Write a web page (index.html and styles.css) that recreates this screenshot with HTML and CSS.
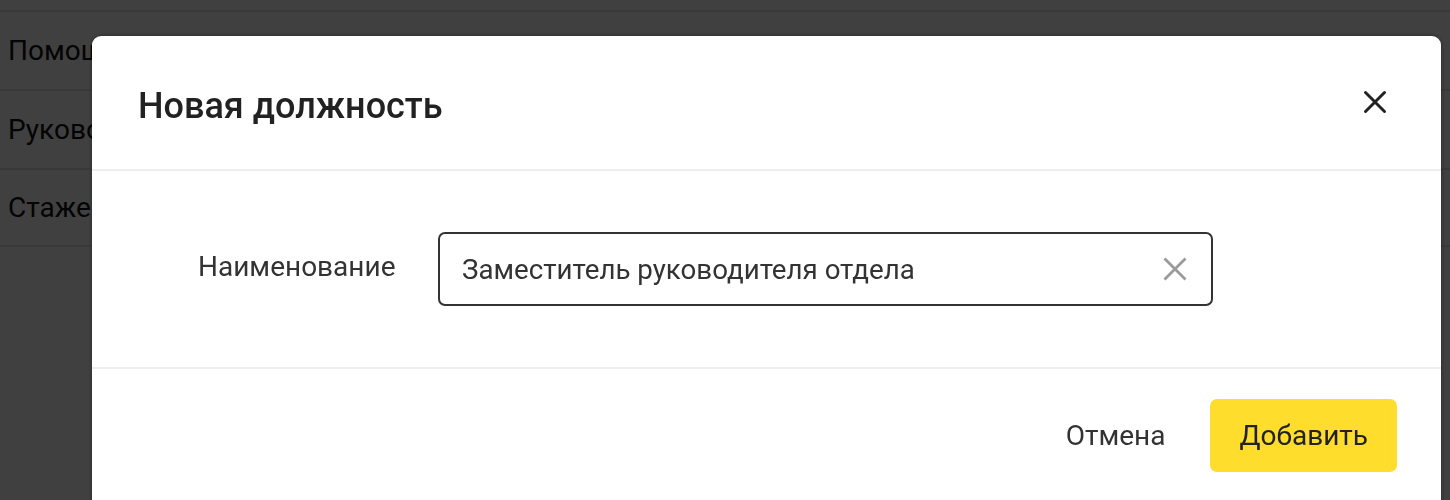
FILE: index.html
```html
<!DOCTYPE html>
<html lang="ru">
<head>
<meta charset="utf-8">
<title>Новая должность</title>
<link rel="stylesheet" href="styles.css">
</head>
<body>
<ul class="list">
  <li class="row">Помощник руководителя</li>
  <li class="row">Руководитель отдела</li>
  <li class="row">Стажер</li>
</ul>
<div class="overlay">
  <div class="modal">
    <div class="modal-header">
      <h2 class="modal-title">Новая должность</h2>
      <button class="close" aria-label="Закрыть">
        <svg width="24" height="24" viewBox="0 0 24 24"><path d="M2.5 2.5L21.5 21.5M21.5 2.5L2.5 21.5" stroke="#222" stroke-width="3" stroke-linecap="round"/></svg>
      </button>
    </div>
    <div class="modal-body">
      <label class="field-label">Наименование</label>
      <div class="input">
        <span class="input-value">Заместитель руководителя отдела</span>
        <svg class="clear" width="24" height="24" viewBox="0 0 24 24"><path d="M1.5 1.5L22.5 22.5M22.5 1.5L1.5 22.5" stroke="#9a9a9a" stroke-width="2.8"/></svg>
      </div>
    </div>
    <div class="modal-footer">
      <button class="btn btn-ghost">Отмена</button>
      <button class="btn btn-primary">Добавить</button>
    </div>
  </div>
</div>
</body>
</html>
```
FILE: styles.css
```css
* { box-sizing: border-box; }
html, body { margin: 0; padding: 0; }
body {
  width: 1450px;
  height: 500px;
  overflow: hidden;
  background: #fff;
  font-family: Roboto, "Noto Sans", Arial, sans-serif;
  color: #333;
}
.list {
  list-style: none;
  margin: 0;
  padding: 10px 0 0;
}
.row {
  height: 79px;
  display: flex;
  align-items: center;
  padding-left: 8px;
  font-size: 28px;
  color: #111;
  border-top: 2px solid #e2e2e2;
}
.row:last-child { border-bottom: 2px solid #e2e2e2; }
.overlay {
  position: fixed;
  inset: 0;
  background: rgba(0,0,0,0.75);
  padding: 36px 9px 0 92px;
}
.modal {
  width: 1349px;
  height: 520px;
  background: #fff;
  border-radius: 9px;
  box-shadow: 0 0 4px rgba(0,0,0,0.4);
  display: flex;
  flex-direction: column;
}
.modal-header {
  height: 135px;
  flex-shrink: 0;
  display: flex;
  align-items: center;
  justify-content: space-between;
  padding: 0 54px 0 46px;
  border-bottom: 2px solid #eeeeee;
}
.modal-title {
  margin: 0;
  font-size: 36px;
  font-weight: 500;
  color: #222;
  padding-top: 6px;
}
.close {
  border: 0;
  background: none;
  padding: 0;
  width: 24px;
  height: 24px;
  display: flex;
  margin-top: -2px;
}
.modal-body {
  height: 198px;
  flex-shrink: 0;
  display: flex;
  align-items: center;
  padding-left: 106px;
  border-bottom: 2px solid #eeeeee;
}
.field-label {
  width: 240px;
  flex-shrink: 0;
  font-size: 28px;
  color: #333;
  margin-top: -6px;
}
.input {
  width: 775px;
  height: 74px;
  border: 2px solid #333;
  border-radius: 7px;
  display: flex;
  align-items: center;
  justify-content: space-between;
  padding: 0 24px 0 22px;
}
.input-value {
  font-size: 27.7px;
  color: #333;
}
.clear { width: 24px; height: 24px; }
.modal-footer {
  display: flex;
  justify-content: flex-end;
  align-items: flex-start;
  padding: 30px 44px 0 0;
  gap: 45px;
}
.btn {
  font-family: inherit;
  font-size: 28px;
  border: 0;
  cursor: pointer;
}
.btn-ghost {
  background: none;
  color: #333;
  padding: 0;
  height: 73px;
}
.btn-primary {
  background: #ffdd2d;
  color: #222;
  height: 73px;
  padding: 0 29px;
  border-radius: 7px;
}
```
